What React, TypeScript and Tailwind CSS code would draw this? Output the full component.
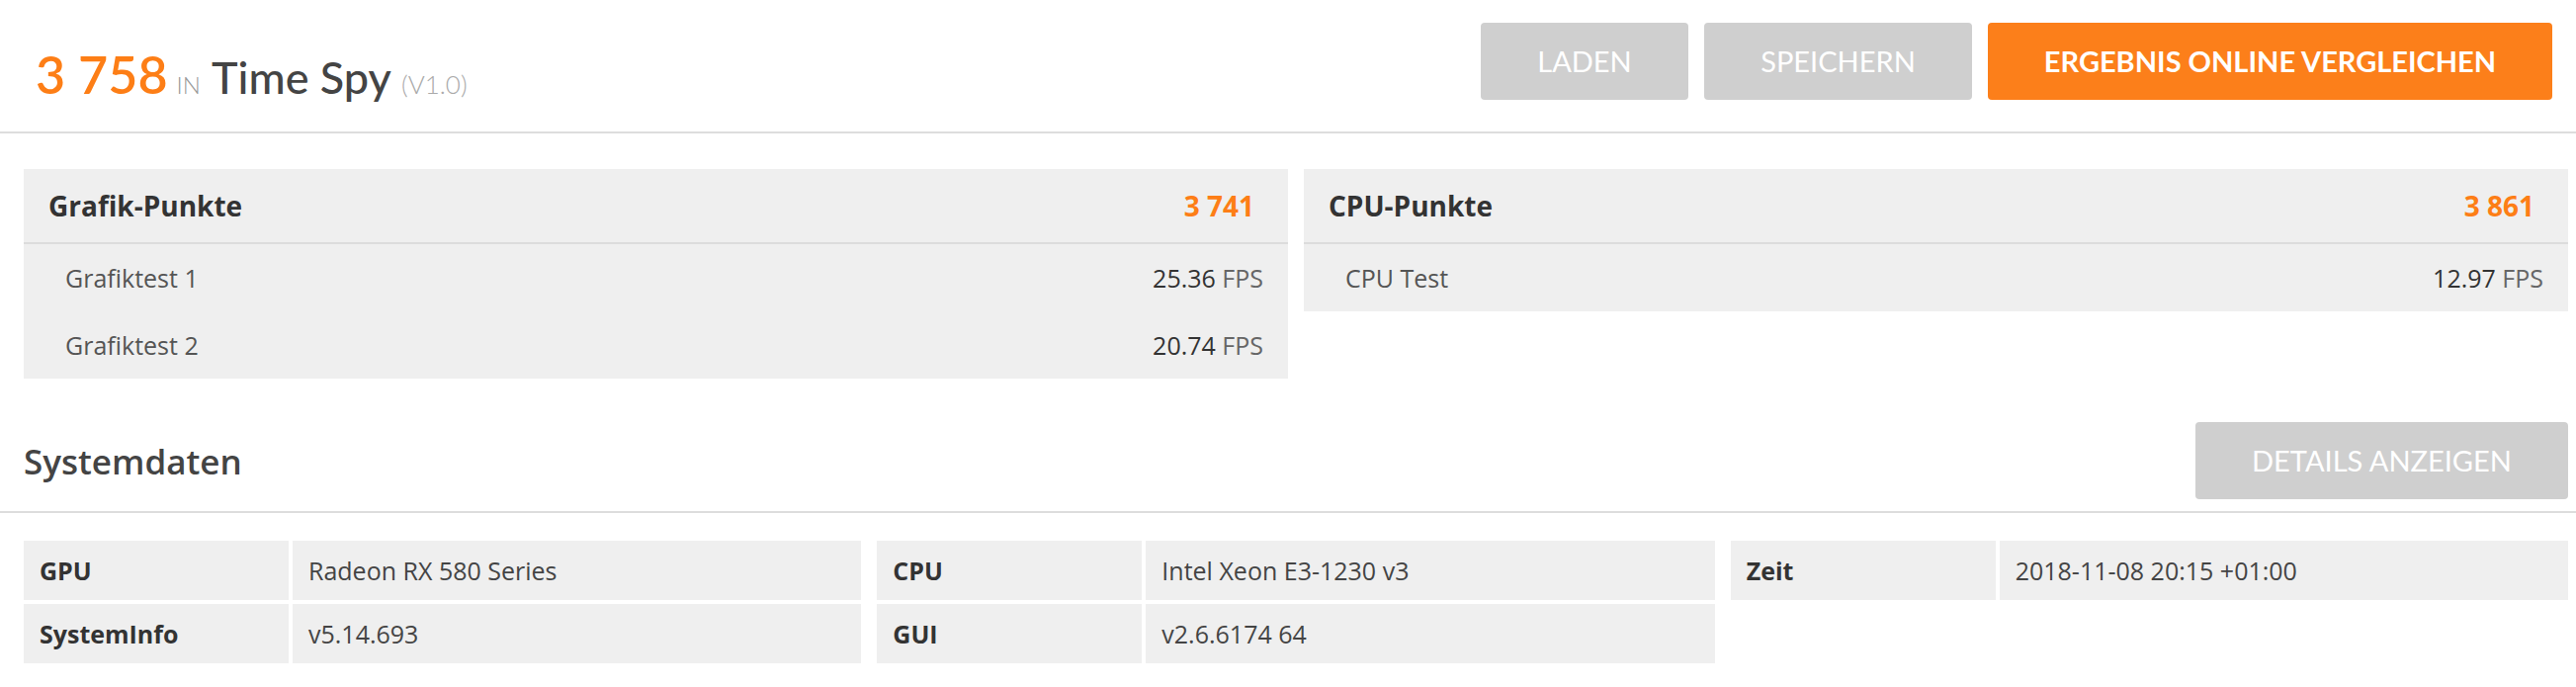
type ScoreRow = {
  name: string;
  value: string;
};

type ScorePanelProps = {
  title: string;
  score: string;
  rows: ScoreRow[];
};

type InfoRow = {
  label: string;
  value: string;
};

const graphicsRows: ScoreRow[] = [
  { name: "Grafiktest 1", value: "25.36" },
  { name: "Grafiktest 2", value: "20.74" },
];

const cpuRows: ScoreRow[] = [{ name: "CPU Test", value: "12.97" }];

const systemGroups: InfoRow[][] = [
  [
    { label: "GPU", value: "Radeon RX 580 Series" },
    { label: "SystemInfo", value: "v5.14.693" },
  ],
  [
    { label: "CPU", value: "Intel Xeon E3-1230 v3" },
    { label: "GUI", value: "v2.6.6174 64" },
  ],
  [{ label: "Zeit", value: "2018-11-08 20:15 +01:00" }],
];

function ScorePanel({ title, score, rows }: ScorePanelProps) {
  return (
    <section className="bg-[#efefef]">
      <div className="flex h-[76px] items-center justify-between border-b-2 border-[#dcdcdc] pl-[25px] pr-[34px]">
        <h2 className="text-[28px] font-bold leading-none text-[#333333]">{title}</h2>
        <span className="text-[28px] font-bold leading-none text-[#fd7e16]">{score}</span>
      </div>
      {rows.map((row) => (
        <div
          key={row.name}
          className="flex h-[68px] items-center justify-between pl-[42px] pr-[25px] text-[25px] leading-none"
        >
          <span className="text-[#555555]">{row.name}</span>
          <span className="text-[#333333]">
            {row.value} <span className="text-[#666666]">FPS</span>
          </span>
        </div>
      ))}
    </section>
  );
}

function InfoGroup({ rows }: { rows: InfoRow[] }) {
  return (
    <div className="grid grid-cols-[268px_1fr] content-start gap-1">
      {rows.map((row) => (
        <div key={row.label} className="contents">
          <div className="flex h-[60px] items-center bg-[#efefef] pl-4 text-[25px] font-bold leading-none text-[#333333]">
            {row.label}
          </div>
          <div className="flex h-[60px] items-center bg-[#efefef] pl-4 text-[25px] leading-none text-[#444444]">
            {row.value}
          </div>
        </div>
      ))}
    </div>
  );
}

export default function App() {
  return (
    <div className="min-h-screen bg-white font-['Open_Sans',sans-serif]">
      <header className="flex items-end justify-between border-b-2 border-[#dddddd] pb-8 pl-9 pr-6 pt-[23px]">
        <h1 className="flex items-baseline font-['Lato',sans-serif] leading-none">
          <span className="text-[52px] font-semibold text-[#fd7e16]">3 758</span>
          <span className="ml-[9px] text-[24px] font-light text-[#999999]">IN</span>
          <span className="ml-[11px] text-[45px] font-medium text-[#444444]">Time Spy</span>
          <span className="ml-[10px] text-[26px] font-light text-[#aaaaaa]">(V1.0)</span>
        </h1>
        <div className="flex gap-4 font-['Lato',sans-serif] text-[29px] text-white">
          <button type="button" className="h-[78px] w-[210px] rounded bg-[#cfcfcf] uppercase">
            Laden
          </button>
          <button type="button" className="h-[78px] w-[271px] rounded bg-[#cfcfcf] uppercase">
            Speichern
          </button>
          <button type="button" className="h-[78px] w-[571px] rounded bg-[#fc7f1a] font-bold uppercase">
            Ergebnis online vergleichen
          </button>
        </div>
      </header>

      <div className="grid grid-cols-2 items-start gap-4 pl-6 pr-2 pt-9">
        <ScorePanel title="Grafik-Punkte" score="3 741" rows={graphicsRows} />
        <ScorePanel title="CPU-Punkte" score="3 861" rows={cpuRows} />
      </div>

      <div className="mt-11 flex items-center justify-between border-b-2 border-[#dddddd] pb-3 pl-6 pr-2">
        <h2 className="text-[35px] font-semibold leading-none text-[#444444]">Systemdaten</h2>
        <button
          type="button"
          className="h-[78px] w-[377px] rounded bg-[#cfcfcf] font-['Lato',sans-serif] text-[29px] uppercase text-white"
        >
          Details anzeigen
        </button>
      </div>

      <div className="grid grid-cols-3 gap-x-4 pl-6 pr-2 pt-7">
        {systemGroups.map((group) => (
          <InfoGroup key={group[0].label} rows={group} />
        ))}
      </div>
    </div>
  );
}
